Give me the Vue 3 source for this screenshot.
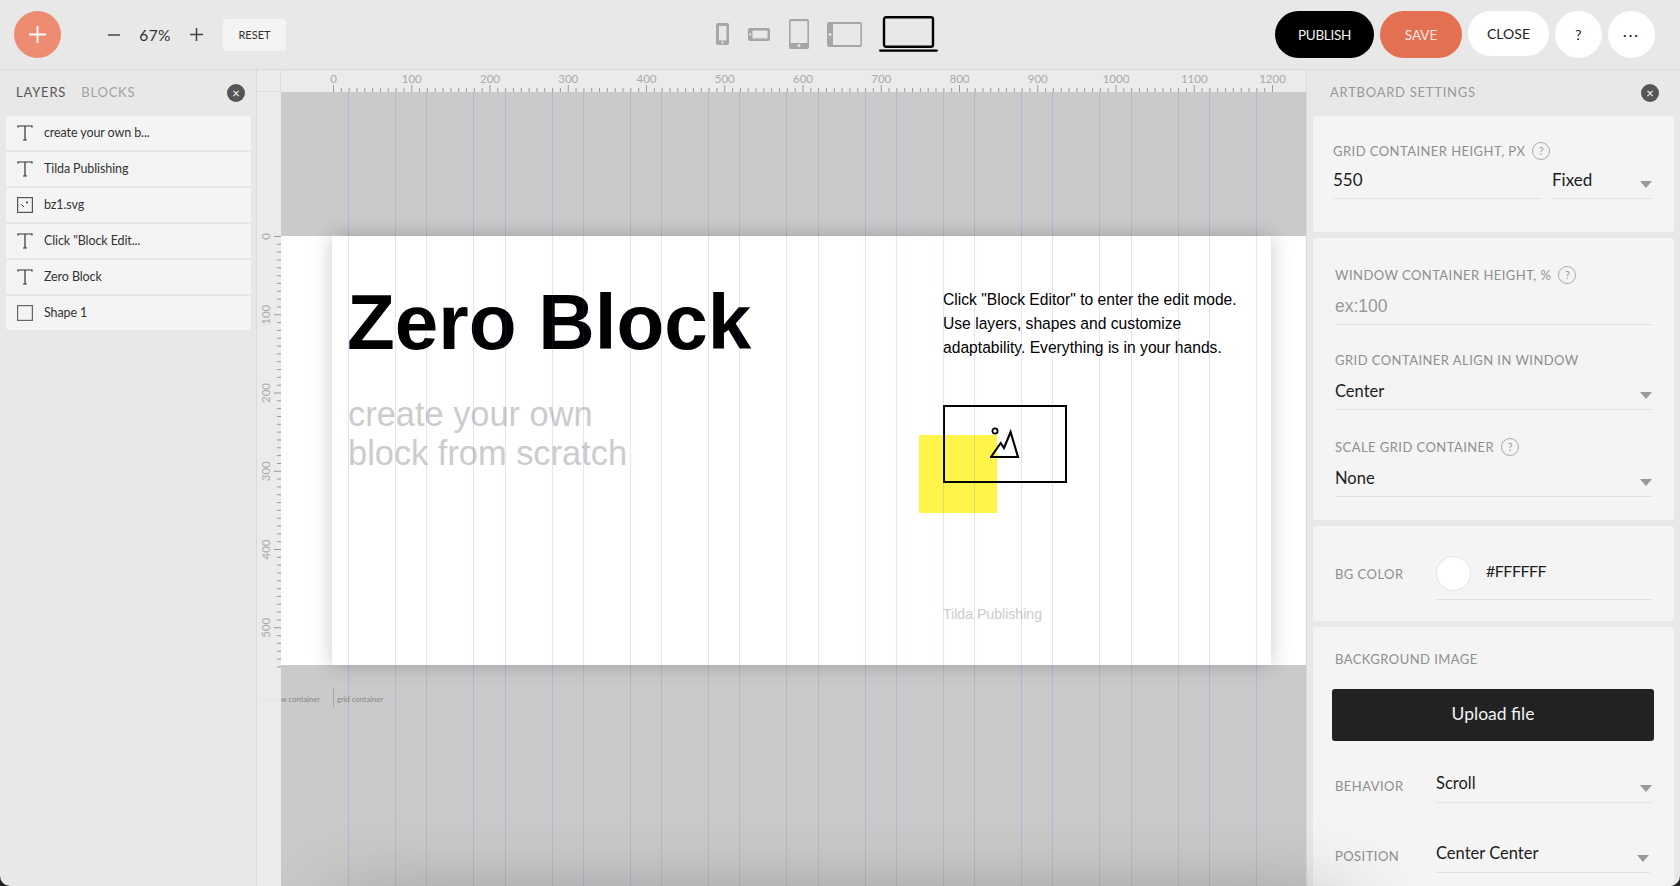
<script setup>
const scale = 7.825
const layers = [
  { name: 'create your own b...', icon: 'text' },
  { name: 'Tilda Publishing', icon: 'text' },
  { name: 'bz1.svg', icon: 'image' },
  { name: 'Click "Block Edit...', icon: 'text' },
  { name: 'Zero Block', icon: 'text' },
  { name: 'Shape 1', icon: 'shape' }
]
const hTicks = Array.from({ length: 121 }, (_, k) => ({ x: 52.5 + k * scale, major: k % 10 === 0 }))
const hLabels = Array.from({ length: 13 }, (_, k) => ({ x: 52.5 + k * 10 * scale, text: String(k * 100) }))
const vTicks = Array.from({ length: 56 }, (_, k) => ({ y: 144.5 + k * scale, major: k % 10 === 0 }))
const vLabels = Array.from({ length: 6 }, (_, k) => ({ y: 144.5 + k * 10 * scale, text: String(k * 100) }))
const gridLines = []
for (let k = 0; k < 12; k++) {
  gridLines.push(52 + (20 + 100 * k) * 0.7825 - 0.5)
  gridLines.push(52 + (80 + 100 * k) * 0.7825 - 0.5)
}
</script>

<template>
  <div class="app">
    <header class="topbar">
      <button class="add"><svg width="17" height="17" viewBox="0 0 17 17"><path d="M8.5 0v17M0 8.5h17" stroke="#fff" stroke-width="1.8" /></svg></button>
      <div class="zoom">
        <svg width="12" height="12" viewBox="0 0 12 12"><path d="M0 6h12" stroke="#444" stroke-width="1.5" /></svg>
        <span class="zoom-val">67%</span>
        <svg width="13" height="13" viewBox="0 0 13 13"><path d="M0 6.5h13M6.5 0v13" stroke="#444" stroke-width="1.5" /></svg>
      </div>
      <button class="reset">RESET</button>
      <div class="devices">
        <svg width="13" height="22" viewBox="0 0 13 22"><rect width="13" height="22" rx="2" fill="#a6a6a6" /><rect x="3" y="3" width="7.4" height="14.5" fill="#e8e8e8" /><circle cx="6.5" cy="19.7" r="1.1" fill="#e8e8e8" /></svg>
        <svg width="22" height="13" viewBox="0 0 22 13"><rect width="22" height="13" rx="2" fill="#a6a6a6" /><rect x="4.5" y="2.6" width="15" height="7.8" fill="#e8e8e8" /><circle cx="2.3" cy="6.5" r="1.1" fill="#e8e8e8" /></svg>
        <svg width="20" height="30" viewBox="0 0 20 30"><rect width="20" height="30" rx="2" fill="#a6a6a6" /><rect x="1.6" y="2.2" width="16.8" height="21.8" fill="#e8e8e8" /><circle cx="10" cy="26.6" r="1.4" fill="#e8e8e8" /></svg>
        <svg width="35" height="25" viewBox="0 0 35 25"><rect width="35" height="25" rx="2" fill="#a6a6a6" /><rect x="6" y="2" width="27.4" height="21" fill="#e8e8e8" /><circle cx="3.1" cy="12.5" r="1.4" fill="#e8e8e8" /></svg>
        <svg width="59" height="36" viewBox="0 0 59 36"><rect x="5" y="1.2" width="49" height="29.6" rx="2" fill="none" stroke="#000" stroke-width="2.4" /><rect y="33.5" width="59" height="2.2" rx="1.1" fill="#000" /></svg>
      </div>
      <div class="actions">
        <button class="pill publish">PUBLISH</button>
        <button class="pill save">SAVE</button>
        <button class="pill close">CLOSE</button>
        <button class="pill round">?</button>
        <button class="pill round dots">···</button>
      </div>
    </header>

    <main class="main">
      <aside class="left">
        <div class="left-head">
          <span class="tab active">LAYERS</span>
          <span class="tab">BLOCKS</span>
          <span class="x">×</span>
        </div>
        <ul class="layers">
          <li v-for="l in layers" :key="l.name" class="layer">
            <svg width="16" height="16" viewBox="0 0 16 16" class="layer-icon">
              <path v-if="l.icon === 'text'" d="M1 2.5V1h14v1.5M8 1v14M6 15h4" fill="none" stroke="#333" stroke-width="1.2" />
              <template v-else-if="l.icon === 'image'">
                <rect x=".6" y=".6" width="14.8" height="14.8" fill="none" stroke="#555" stroke-width="1.2" />
                <path d="M4.5 7.5l2.5 2.5" stroke="#333" stroke-width="1" />
                <circle cx="10" cy="5.5" r="1" fill="#333" />
              </template>
              <rect v-else x=".6" y=".6" width="14.8" height="14.8" fill="none" stroke="#666" stroke-width="1.2" />
            </svg>
            <span class="layer-name">{{ l.name }}</span>
          </li>
        </ul>
      </aside>

      <section class="center">
        <div class="corner"></div>
        <svg class="hruler" width="1025" height="22" viewBox="0 0 1025 22">
          <line v-for="t in hTicks" :key="t.x" :x1="t.x" :x2="t.x" :y1="t.major ? 15 : 18" y2="22" stroke="#9a9a9a" />
          <text v-for="t in hLabels" :key="t.text" :x="t.x" y="13" text-anchor="middle" class="rtext">{{ t.text }}</text>
        </svg>
        <svg class="vruler" width="24" height="794" viewBox="0 0 24 794">
          <line v-for="t in vTicks" :key="t.y" :y1="t.y" :y2="t.y" :x1="t.major ? 17 : 20" x2="24" stroke="#9a9a9a" />
          <text v-for="t in vLabels" :key="t.text" text-anchor="middle" class="rtext" :transform="`translate(13 ${t.y}) rotate(-90)`">{{ t.text }}</text>
        </svg>
        <div class="canvas">
          <div class="band"></div>
          <div class="artboard">
            <div class="a-title">Zero Block</div>
            <div class="a-sub">create your own<br />block from scratch</div>
            <div class="a-text">Click "Block Editor" to enter the edit mode.<br />Use layers, shapes and customize<br />adaptability. Everything is in your hands.</div>
            <div class="a-yellow"></div>
            <div class="a-frame"></div>
            <svg class="a-mount" width="32" height="32" viewBox="0 0 32 32">
              <circle cx="5" cy="4" r="2.6" fill="none" stroke="#000" stroke-width="1.8" />
              <path d="M1 30l9.7-14 3.3 5 6.6-16 7.4 25z" fill="none" stroke="#000" stroke-width="2.1" />
            </svg>
            <div class="a-tilda">Tilda Publishing</div>
          </div>
          <div v-for="x in gridLines" :key="x" class="gline" :style="{ left: x + 'px' }"></div>
          <span class="hint hint-w">window container</span>
          <span class="hint-sep"></span>
          <span class="hint hint-g">grid container</span>
        </div>
      </section>

      <aside class="right">
        <div class="right-head">
          <span class="right-title">ARTBOARD SETTINGS</span>
          <span class="x">×</span>
        </div>

        <div class="card card-1">
          <div class="label">GRID CONTAINER HEIGHT, PX <i class="help">?</i></div>
          <div class="two">
            <div class="row short"><span>550</span></div>
            <div class="row short select"><span>Fixed</span><b class="caret"></b></div>
          </div>
        </div>

        <div class="card card-2">
          <div class="label">WINDOW CONTAINER HEIGHT, % <i class="help">?</i></div>
          <div class="row placeholder"><span>ex:100</span></div>
          <div class="label gap-a">GRID CONTAINER ALIGN IN WINDOW</div>
          <div class="row"><span>Center</span><b class="caret"></b></div>
          <div class="label gap-b">SCALE GRID CONTAINER <i class="help">?</i></div>
          <div class="row"><span>None</span><b class="caret"></b></div>
        </div>

        <div class="card card-3">
          <div class="label inline-label">BG COLOR</div>
          <div class="color"><i class="swatch"></i><span>#FFFFFF</span></div>
        </div>

        <div class="card card-4">
          <div class="label">BACKGROUND IMAGE</div>
          <button class="upload">Upload file</button>
          <div class="inline first">
            <div class="label">BEHAVIOR</div>
            <div class="row"><span>Scroll</span><b class="caret"></b></div>
          </div>
          <div class="inline second">
            <div class="label">POSITION</div>
            <div class="row"><span>Center Center</span><b class="caret"></b></div>
          </div>
        </div>
      </aside>
    </main>
    <div class="bottom-shade"></div>
  </div>
</template>

<style>
html, body { margin: 0; background: #222; }
</style>

<style scoped>
.app {
  position: relative;
  width: 1680px;
  height: 886px;
  overflow: hidden;
  border-radius: 0 0 10px 10px;
  background: #e8e8e8;
  font-family: Lato, "Open Sans", sans-serif;
  color: #222;
  display: flex;
  flex-direction: column;
}
button { font-family: inherit; border: 0; padding: 0; }
.topbar {
  height: 69px;
  flex: none;
  display: flex;
  align-items: center;
  padding: 0 25px 0 14px;
  border-bottom: 1px solid #dadada;
}
.add {
  width: 47px; height: 47px; border-radius: 50%;
  background: #ee8c72;
  display: flex; align-items: center; justify-content: center;
  margin-top: -1px;
}
.zoom { display: flex; align-items: center; margin-left: 47px; color: #333; }
.zoom-val { width: 70px; text-align: center; font-size: 15.5px; letter-spacing: .3px; }
.reset {
  margin-left: 20px; width: 63px; height: 32px; border-radius: 4px;
  background: #f4f4f4; font-size: 11px; color: #333;
}
.devices { display: flex; align-items: center; margin: -1px 0 0 430px; }
.devices svg:nth-child(2) { margin-left: 19px; }
.devices svg:nth-child(3) { margin-left: 19px; }
.devices svg:nth-child(4) { margin-left: 18px; }
.devices svg:nth-child(5) { margin-left: 17px; }
.actions { margin-left: auto; display: flex; gap: 6px; }
.pill {
  height: 47px; border-radius: 24px; font-size: 14px; background: #fff; color: #222;
}
.publish { width: 99px; background: #000; color: #f2f2f2; font-size: 13.5px; letter-spacing: -.3px; }
.save { width: 82px; background: #e37050; color: #fbe9e3; font-size: 13.5px; }
.close { width: 81px; height: 45px; }
.round { width: 47px; font-size: 14px; }
.dots { font-size: 14px; letter-spacing: 2px; }

.main { flex: 1; display: flex; min-height: 0; }
.left { width: 256px; flex: none; border-right: 1px solid #dadada; }
.left-head { position: relative; height: 46px; display: flex; align-items: center; padding: 0 0 2px 16px; box-sizing: border-box; gap: 15px; }
.tab { font-size: 13px; letter-spacing: .8px; color: #a2a2a2; }
.tab.active { color: #555; }
.x {
  position: absolute; right: 11px; top: 14px;
  width: 18px; height: 18px; border-radius: 50%;
  background: #555; color: #fff; font-size: 13px; line-height: 18px; text-align: center;
}
.layers { list-style: none; margin: 0 0 0 6px; padding: 0; width: 245px; display: flex; flex-direction: column; gap: 2px; }
.layer {
  height: 34px; background: #f4f4f4; display: flex; align-items: center;
  font-size: 12.5px; color: #333; padding-left: 11px; gap: 11px;
}
.layer-name { padding-bottom: 2px; letter-spacing: -.1px; }
.layer:first-child { border-radius: 3px 3px 0 0; }
.layer:last-child { border-radius: 0 0 3px 3px; }
.layer-icon { flex: none; }

.center {
  position: relative; width: 1049px; flex: none; overflow: hidden;
  display: grid; grid-template-columns: 24px 1025px; grid-template-rows: 22px 794px;
}
.corner { background: #ebebeb; border-bottom: 1px solid #dedede; border-right: 1px solid #dedede; box-sizing: border-box; position: relative; z-index: 2; }
.hruler { background: #ebebeb; position: relative; z-index: 2; display: block; }
.vruler { background: rgba(235, 235, 235, .93); position: relative; z-index: 2; display: block; }
.rtext { font-family: Lato, sans-serif; font-size: 11.5px; fill: #aaa; }
.canvas { position: relative; background: #cacaca; }
.band { position: absolute; left: 0; right: 0; top: 144px; height: 429px; background: #fff; }
.artboard {
  position: absolute; left: 51px; top: 144px; width: 939px; height: 429px;
  background: #fff; box-shadow: 0 0 20px rgba(0, 0, 0, .22);
  font-family: "Liberation Sans", Arial, sans-serif;
}
.a-title { position: absolute; left: 15px; top: 47px; font-size: 78.25px; font-weight: 700; line-height: 78px; color: #000; white-space: nowrap; }
.a-sub { position: absolute; left: 16px; top: 159px; font-size: 34.4px; line-height: 39px; color: #ccc; white-space: nowrap; }
.a-text { position: absolute; left: 611px; top: 52px; font-size: 15.65px; line-height: 24px; color: #000; white-space: nowrap; }
.a-tilda { position: absolute; left: 611px; top: 369px; font-size: 14.1px; line-height: 18px; color: #ccc; white-space: nowrap; }
.a-yellow { position: absolute; left: 587px; top: 199px; width: 78px; height: 78px; background: #fff54a; }
.a-frame { position: absolute; left: 611px; top: 169px; width: 120px; height: 74px; border: 2px solid #000; }
.a-mount { position: absolute; left: 658px; top: 191px; }
.gline { position: absolute; top: 0; bottom: 0; width: 1px; background: rgba(80, 80, 255, .16); }
.hint { position: absolute; top: 601px; font-size: 7.6px; line-height: 12px; color: #858585; white-space: nowrap; }
.hint-w { right: 986px; }
.hint-g { left: 56px; }
.hint-sep { position: absolute; left: 52px; top: 596px; width: 1px; height: 20px; background: #aaa; }

.right { width: 374px; flex: none; box-sizing: border-box; border-left: 1px solid #dadada; padding-left: 6px; }
.right-head { position: relative; height: 46px; display: flex; align-items: center; padding: 0 0 2px 17px; box-sizing: border-box; }
.right-title { font-size: 13px; letter-spacing: .75px; color: #999; }
.right .x { right: 21px; }
.card { width: 361px; box-sizing: border-box; background: #f4f4f4; border-radius: 3px; margin-bottom: 6px; padding: 0 22px; }
.label { font-size: 13px; line-height: 18px; letter-spacing: .45px; color: #8f8f8f; display: flex; align-items: center; gap: 7px; white-space: nowrap; }
.help {
  width: 16px; height: 16px; border: 1px solid #aaa; border-radius: 50%; color: #999;
  font-style: normal; font-size: 11px; line-height: 16px; text-align: center; letter-spacing: 0;
}
.row {
  flex: 1; display: flex; justify-content: space-between;
  padding: 10px 0 6px; border-bottom: 1px solid #e2e2e2;
  font-size: 16.5px; line-height: 24px; color: #1c1c1c;
}
.row.short { padding: 8px 0 6px; font-size: 17px; }
.caret { width: 0; height: 0; border: 6px solid transparent; border-top: 7px solid #999; border-bottom: 0; align-self: flex-end; margin-bottom: 4px; }
.placeholder { color: #999; font-family: "Liberation Sans", sans-serif; font-size: 17.5px; }
.card-1 { height: 116px; padding: 26px 22px 0 20px; }
.two { display: flex; gap: 10px; }
.two .row:first-child { flex: none; width: 209px; }
.two .row:last-child { flex: none; width: 100px; }
.card-2 { height: 282px; padding-top: 28px; }
.gap-a { margin-top: 26px; }
.gap-b { margin-top: 28px; }
.card-3 { height: 95px; display: flex; align-items: center; padding-top: 0; }
.inline-label { width: 101px; flex: none; }
.color { flex: 1; display: flex; gap: 15px; padding-bottom: 8px; border-bottom: 1px solid #e2e2e2; margin-top: 9px; font-size: 16px; letter-spacing: -.5px; }
.swatch { width: 33px; height: 33px; border: 1px solid #e4e4e4; border-radius: 50%; background: #fff; }
.color span { line-height: 30px; }
.card-4 { height: 300px; padding-top: 23px; margin-bottom: 0; }
.upload {
  display: block; width: 322px; height: 52px; margin: 21px 0 0 -3px; padding-bottom: 3px; border-radius: 3px;
  background: #222; color: #f2f2f2; font-size: 17.5px;
}
.inline { display: flex; align-items: flex-start; }
.inline .label { width: 101px; flex: none; margin-top: 6px; }
.inline .row { padding: 0 0 7px; }
.inline.first { margin-top: 30px; }
.inline.second { margin-top: 38px; margin-right: 2px; }
.inline .caret { margin-bottom: 3px; }
.inline.second .caret { margin-right: 1px; }
.bottom-shade {
  position: absolute; left: 340px; width: 1000px; top: 915px; height: 60px;
  box-shadow: 0 0 90px rgba(0, 0, 0, .42); pointer-events: none;
}
</style>
